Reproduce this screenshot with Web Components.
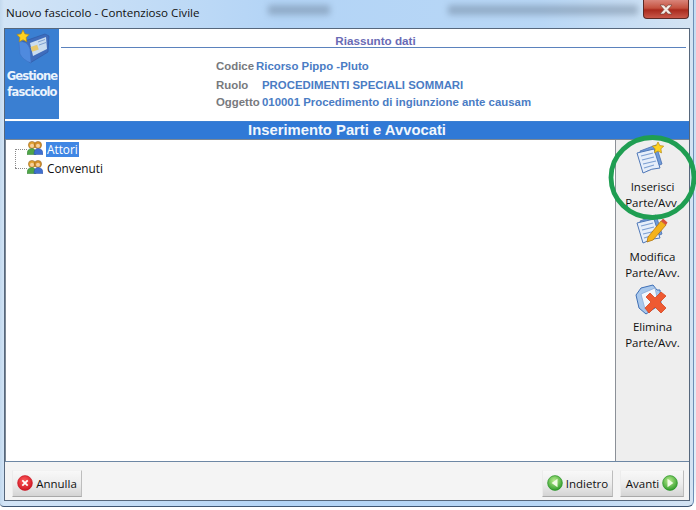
<!DOCTYPE html>
<html>
<head>
<meta charset="utf-8">
<title>Nuovo fascicolo</title>
<style>
  html, body { margin: 0; padding: 0; }
  body { width: 696px; height: 510px; overflow: hidden; font-family: "Open Sans", "Liberation Sans", sans-serif; }
</style>
</head>
<body>

<app-window title="Nuovo fascicolo - Contenzioso Civile">
  <side-badge slot="badge">Gestione<br>fascicolo</side-badge>
  <summary-panel slot="summary" heading="Riassunto dati">
    <summary-row label="Codice" gap="0" h="19">Ricorso Pippo -Pluto</summary-row>
    <summary-row label="Ruolo" gap="6" h="19">PROCEDIMENTI SPECIALI SOMMARI</summary-row>
    <summary-row label="Oggetto" gap="6" h="15">010001 Procedimento di ingiunzione ante causam</summary-row>
  </summary-panel>
  <section-band slot="band">Inserimento Parti e Avvocati</section-band>
  <tree-view slot="tree">
    <tree-item selected>Attori</tree-item>
    <tree-item>Convenuti</tree-item>
  </tree-view>
  <action-button slot="rail" icon="add">Inserisci<br>Parte/Avv.</action-button>
  <action-button slot="rail" icon="edit">Modifica<br>Parte/Avv.</action-button>
  <action-button slot="rail" icon="del">Elimina<br>Parte/Avv.</action-button>
  <wizard-button slot="left" icon="cancel" w="70">Annulla</wizard-button>
  <wizard-button slot="right" icon="back" w="71">Indietro</wizard-button>
  <wizard-button slot="right" icon="next" w="64" after>Avanti</wizard-button>
</app-window>

<script>
// shared bits of svg for the icons
const STAR = (x, y, r) => {
  let pts = [];
  for (let i = 0; i < 10; i++) {
    const a = -Math.PI / 2 + i * Math.PI / 5;
    const q = i % 2 ? r * 0.5 : r;
    pts.push((x + q * Math.cos(a)).toFixed(1) + ',' + (y + q * Math.sin(a)).toFixed(1));
  }
  return `<polygon points="${pts.join(' ')}" fill="#ffd21e" stroke="#b58a10" stroke-width=".7" stroke-linejoin="round"/>`;
};

const NOTE = `
  <path d="M6 9 L22 3 L28 22 L12 29 Z" fill="#6f9bd8" stroke="#4a6fb0" stroke-width=".8"/>
  <path d="M3 11 L20 7 L26 26 Q18 26 9 31 Z" fill="#e6eefa" stroke="#4f78b8" stroke-width="1"/>
  <path d="M7 14 L19 11 M8 18 L20 15 M9 22 L22 19 M10 26 L20 23" stroke="#7c9fd2" stroke-width="1.2" fill="none"/>`;

const FOLDER = `
  <path d="M2 13 L7 6 L19 3 L23 8 L26 8 L27 22 L12 32 L5 26 Z" fill="#a9c8ec" stroke="#3f6fb5" stroke-width="1"/>
  <path d="M7 12 L21 6 L24 20 L11 27 Z" fill="#f2f6fc" stroke="#8aa9d6" stroke-width=".8"/>`;

const ROUND = (id, c1, c2, inner) => `
  <svg width="16" height="16" viewBox="0 0 16 16">
    <defs><radialGradient id="${id}" cx=".45" cy=".35" r=".75"><stop offset="0" stop-color="${c1}"/><stop offset="1" stop-color="${c2}"/></radialGradient></defs>
    <circle cx="8" cy="8" r="7.4" fill="url(#${id})" stroke="${c2}" stroke-width=".6"/>
    ${inner}
  </svg>`;

const ICONS = {
  add: `<svg width="34" height="34" viewBox="0 0 34 34">${NOTE}${STAR(24, 6, 6)}</svg>`,
  edit: `<svg width="34" height="34" viewBox="0 0 34 34">${NOTE}
    <path d="M14 25 L27 9 L32 13 L19 28 L13 30 Z" fill="#f4b21c" stroke="#b4770f" stroke-width=".8"/>
    <path d="M27 9 L29 6.5 L33.5 10.5 L32 13 Z" fill="#d8503c"/></svg>`,
  del: `<svg width="34" height="34" viewBox="0 0 34 34">${FOLDER}
    <path d="M12 15 L16 11 L21 16 L27 10 L32 14 L26 20 L32 26 L27 31 L21 25 L15 31 L11 26 L17 20 Z" fill="#ee5a32" stroke="#d6451f" stroke-width=".8" stroke-linejoin="round"/></svg>`,
  cancel: ROUND('rx', '#ff5a5a', '#c80d1c', '<path d="M5.3 5.3 L10.7 10.7 M10.7 5.3 L5.3 10.7" stroke="#fff" stroke-width="1.8"/>'),
  back: ROUND('gb', '#b8ee8e', '#1d8f1d', '<path d="M10.5 3.8 L4.6 8 L10.5 12.2 Z" fill="#f1fbe6"/>'),
  next: ROUND('gn', '#b8ee8e', '#1d8f1d', '<path d="M5.5 3.8 L11.4 8 L5.5 12.2 Z" fill="#f1fbe6"/>')
};

class AppWindow extends HTMLElement {
  constructor() {
    super();
    this.attachShadow({mode: 'open'});
    this.shadowRoot.innerHTML = `
      <style>
        :host { display: block; position: relative; width: 696px; height: 510px; overflow: hidden; background: linear-gradient(#c4dcf2, #e2eef9 480px, #fff 507px); }
        .frame { width: 694px; height: 507px; box-sizing: border-box; display: flex; flex-direction: column; border-right: 1px solid #6d8fb5; border-bottom: 1px solid #3f5673; border-radius: 0 0 6px 4px; overflow: hidden;
          background: linear-gradient(90deg, #c3d9ee 0, #d2e4f6 4px, #b3d4f6 280px, #b8d7f6 540px, #d3e3f3 689px); }
        .title { height: 28px; flex: none; display: flex; align-items: center; padding: 0 0 3px 6px; box-sizing: border-box; position: relative;
          font: 11.6px "Open Sans", "Liberation Sans", sans-serif; color: #111; }
        .smudge { position: absolute; top: 5px; height: 10px; background: #5c6f85; opacity: .4; filter: blur(3px); }
        .close { position: absolute; top: 0; left: 643px; width: 46px; height: 19px; box-sizing: border-box; border: 1px solid #5a2a26; border-top: 0;
          border-radius: 0 0 4px 4px; background: linear-gradient(#d9857a, #c4513f 45%, #a92a1d 55%, #c9584a); display: flex; align-items: center; justify-content: center; }
        .client { flex: none; box-sizing: border-box; margin-left: 4px; width: 686px; height: 473px; border: 1px solid #56677c;
          background: #f4f4f4; display: flex; flex-direction: column; }
        .top { display: flex; height: 90px; flex: none; background: #fff; }
        .gap { height: 2px; background: #fff; flex: none; }
        .mid { display: flex; height: 321px; flex: none; }
        .rail { width: 74px; flex: none; box-sizing: border-box; border-left: 1px solid #8b9097; background: #eeeeee; padding-top: 2px; display: flex; flex-direction: column; }
        .bottom { flex: 1; box-sizing: border-box; border-top: 1px solid #6d87a4; display: flex; justify-content: space-between; align-items: flex-start; padding: 8px 5px 0 7px; }
        .right { display: flex; gap: 7px; }
        .ring { position: absolute; left: 606px; top: 133px; width: 92px; height: 89px; pointer-events: none; }
      </style>
      <div class="frame">
        <div class="title">
          <span class="smudge" style="left:268px;width:62px"></span>
          <span class="smudge" style="left:448px;width:190px"></span>
          <span style="position:relative">${this.getAttribute('title')}</span>
          <span class="close"><svg width="16" height="11" viewBox="0 0 16 11"><path d="M2 1 H6 L8 3.4 L10 1 H14 L10 5.5 L14 10 H10 L8 7.6 L6 10 H2 L6 5.5 Z" fill="#f4ece6" stroke="#6a3a30" stroke-width=".6"/></svg></span>
        </div>
        <div class="client">
          <div class="top"><slot name="badge"></slot><slot name="summary"></slot></div>
          <div class="gap"></div>
          <slot name="band"></slot>
          <div class="mid">
            <slot name="tree"></slot>
            <div class="rail"><slot name="rail"></slot></div>
          </div>
          <div class="bottom">
            <slot name="left"></slot>
            <div class="right"><slot name="right"></slot></div>
          </div>
        </div>
      </div>
      <svg class="ring" viewBox="0 0 92 89"><ellipse cx="46.5" cy="44.5" rx="41.5" ry="40" fill="none" stroke="#1f9e52" stroke-width="4.8"/></svg>
    `;
  }
}
customElements.define('app-window', AppWindow);

class SideBadge extends HTMLElement {
  constructor() {
    super();
    this.attachShadow({mode: 'open'});
    this.shadowRoot.innerHTML = `
      <style>
        :host { display: flex; flex-direction: column; align-items: center; width: 54px; height: 90px; flex: none; background: #3a7fd2; color: #eaf3fc;
          font: bold 11.5px/16px "DejaVu Sans", "Liberation Sans", sans-serif; text-align: center; letter-spacing: -.85px; }
        svg { margin-top: 1px; margin-bottom: 4px; margin-left: 4px; flex: none; }
      </style>
      <svg width="36" height="34" viewBox="0 0 36 34">
        <path d="M6 12 L29 4 L33 6 L32 22 L14 33 Z" fill="#3f6cbc" stroke="#2f5aa6" stroke-width=".7"/>
        <path d="M14 13 L30 7 L31 19 L17 26 Z" fill="#c9dcf0"/>
        <path d="M22 12 L29 9.5 M23 15 L30 12.5" stroke="#7d9fd0" stroke-width="1"/>
        <rect x="15" y="16" width="7" height="5" fill="#e7c86c" transform="rotate(-18 18 18)"/>
        <path d="M3 12 Q11 10 14 19 L15 33 Q7 30 4 24 Z" fill="#4f8ade" stroke="#3d6fc0" stroke-width=".5"/>
        ${STAR(7, 6.5, 6.5)}
      </svg>
      <slot></slot>
    `;
  }
}
customElements.define('side-badge', SideBadge);

class SummaryPanel extends HTMLElement {
  constructor() {
    super();
    this.attachShadow({mode: 'open'});
    this.shadowRoot.innerHTML = `
      <style>
        :host { display: block; width: 630px; height: 90px; background: #fff; font: bold 11.7px "Liberation Sans", sans-serif; }
        .head { margin-left: 2px; margin-right: 3px; height: 19px; box-sizing: border-box; border-bottom: 1px solid #5b82bd; color: #6a6bb5; text-align: center; padding: 6px 0 0 4px; line-height: 12px; }
        .rows { padding: 8px 0 0 157px; display: flex; flex-direction: column; }
      </style>
      <div class="head">${this.getAttribute('heading')}</div>
      <div class="rows"><slot></slot></div>
    `;
  }
}
customElements.define('summary-panel', SummaryPanel);

class SummaryRow extends HTMLElement {
  constructor() {
    super();
    this.attachShadow({mode: 'open'});
    this.shadowRoot.innerHTML = `
      <style>
        :host { display: flex; height: ${this.getAttribute('h')}px; align-items: center; font: bold 11.4px "Liberation Sans", sans-serif; white-space: nowrap; }
        .l { color: #77797d; width: 40px; flex: none; margin-right: ${this.getAttribute('gap')}px; }
        .v { color: #4a7cc4; }
      </style>
      <span class="l">${this.getAttribute('label')}</span><span class="v"><slot></slot></span>
    `;
  }
}
customElements.define('summary-row', SummaryRow);

class SectionBand extends HTMLElement {
  constructor() {
    super();
    this.attachShadow({mode: 'open'});
    this.shadowRoot.innerHTML = `
      <style>
        :host { display: block; height: 19px; flex: none; box-sizing: border-box; border-top: 1px solid #3a7fd2; background: #3079d6; color: #f2f7fd; border-bottom: 1px solid #7b8794;
          text-align: center; font: bold 14.8px/17px "Liberation Sans", sans-serif; }
      </style>
      <slot></slot>
    `;
  }
}
customElements.define('section-band', SectionBand);

class TreeView extends HTMLElement {
  constructor() {
    super();
    this.attachShadow({mode: 'open'});
    this.shadowRoot.innerHTML = `
      <style>
        :host { display: block; width: 610px; height: 321px; flex: none; box-sizing: border-box; background: #fff; border-left: 1px solid #7b8794; padding: 0 0 0 9px; position: relative; }
        .wrap { display: flex; flex-direction: column; gap: 1px; position: relative; }
        .dots { position: absolute; left: 0; top: 9px; width: 5px; height: 19px; border-left: 1px dotted #8a8a8a; }
      </style>
      <div class="wrap"><span class="dots"></span><slot></slot></div>
    `;
  }
}
customElements.define('tree-view', TreeView);

class TreeItem extends HTMLElement {
  constructor() {
    super();
    this.attachShadow({mode: 'open'});
    const sel = this.hasAttribute('selected');
    this.shadowRoot.innerHTML = `
      <style>
        :host { display: flex; align-items: center; height: 18px; font: 11.8px "Open Sans", "Liberation Sans", sans-serif; color: #111; }
        .dash { width: 12px; border-top: 1px dotted #8a8a8a; flex: none; }
        svg { flex: none; margin-right: 3px; margin-top: -3px; }
        .t { padding: 0 1px; line-height: 15px; ${sel ? 'background:#3f86e4;color:#fff;' : ''} }
      </style>
      <span class="dash"></span>
      <svg width="16" height="14" viewBox="0 0 16 14">
        <circle cx="5" cy="4" r="3.6" fill="#e0a030" stroke="#8a5a1c" stroke-width=".5"/><circle cx="11" cy="4" r="3.6" fill="#d4902a" stroke="#8a5a1c" stroke-width=".5"/>
        <circle cx="5" cy="4.7" r="2" fill="#f5cf9c"/><circle cx="11" cy="4.7" r="2" fill="#f5cf9c"/>
        <path d="M0 13.5 Q0 7.5 5 7.5 Q9 7.5 9 13.5 Z" fill="#4fa548" stroke="#2f7a30" stroke-width=".5"/>
        <path d="M7 13.5 Q7 7.5 11 7.5 Q16 7.5 16 13.5 Z" fill="#3e6fd0" stroke="#2a4f9e" stroke-width=".5"/>
      </svg>
      <span class="t"><slot></slot></span>
    `;
  }
}
customElements.define('tree-item', TreeItem);

class ActionButton extends HTMLElement {
  constructor() {
    super();
    this.attachShadow({mode: 'open'});
    this.shadowRoot.innerHTML = `
      <style>
        :host { display: flex; flex-direction: column; align-items: center; height: 70px; font: 11.5px/16px "Open Sans", "Liberation Sans", sans-serif; color: #111; text-align: center; white-space: nowrap; }
        svg { display: block; margin-left: -3px; }
        .t { margin-top: 3px; }
      </style>
      ${ICONS[this.getAttribute('icon')]}
      <span class="t"><slot></slot></span>
    `;
  }
}
customElements.define('action-button', ActionButton);

class WizardButton extends HTMLElement {
  constructor() {
    super();
    this.attachShadow({mode: 'open'});
    const after = this.hasAttribute('after');
    this.shadowRoot.innerHTML = `
      <style>
        :host { display: inline-flex; align-items: center; justify-content: center; gap: 3px; width: ${this.getAttribute('w')}px; height: 27px; box-sizing: border-box; padding-bottom: 1px;
          background: linear-gradient(#f8f8f8, #ededed 50%, #d4d4d4); border-right: 1px solid #bdbdbd; border-bottom: 1px solid #a9a9a9; border-top: 1px solid #f2f2f2; border-left: 1px solid #ececec;
          font: 11.5px "Open Sans", "Liberation Sans", sans-serif; color: #111; }
      </style>
      ${after ? '' : ICONS[this.getAttribute('icon')]}
      <slot></slot>
      ${after ? ICONS[this.getAttribute('icon')] : ''}
    `;
  }
}
customElements.define('wizard-button', WizardButton);
</script>
</body>
</html>
